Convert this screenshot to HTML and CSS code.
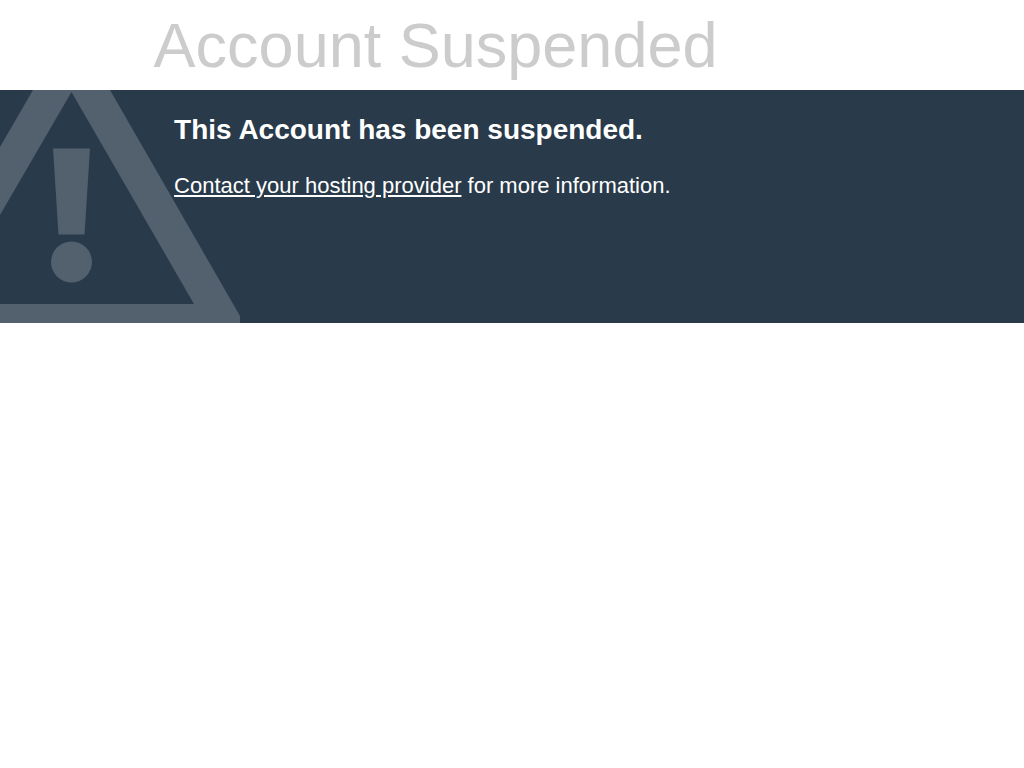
FILE: index.html
```html
<!DOCTYPE html>
<html lang="en">
<head>
    <meta charset="UTF-8">
    <meta name="viewport" content="width=device-width, initial-scale=1.0">
    <title>Account Suspended</title>
    <link rel="stylesheet" href="styles.css">
</head>
<body>
    <header class="page-header">
        <h1 class="page-title">Account Suspended</h1>
    </header>
    <main class="status">
        <!-- Warning sign, cropped by the edges of the band -->
        <svg class="status-icon" viewBox="0 0 240 233" width="240" height="233" aria-hidden="true">
            <path fill-rule="evenodd" d="M0 57 L33 0 H110 L240 226 V233 H0 V214 H194 L71.500 2 L0 125 Z"/>
            <path d="M53 58.500 H90 L84.500 144.500 H58.500 Z"/>
            <circle cx="71.500" cy="172" r="20.500"/>
        </svg>
        <div class="status-text">
            <h2 class="status-title">This Account has been suspended.</h2>
            <p class="status-info"><a href="#">Contact your hosting provider</a> for more information.</p>
        </div>
    </main>
</body>
</html>
```
FILE: styles.css
```css
body {
    margin: 0;
    font-family: "Liberation Sans", Arial, sans-serif;
    font-size: 22px;
    background: #ffffff;
}
.page-header {
    padding: 9px 15%;
}
.page-title {
    margin: 0;
    color: #cccccc;
    font-size: 63px;
    font-weight: normal;
    line-height: 72px;
}
.status {
    position: relative;
    box-sizing: border-box;
    min-height: 233px;
    padding: 24px 17%;
    background: #293a4a;
    color: #ffffff;
}
/* Sits behind the text */
.status-icon {
    position: absolute;
    top: 0;
    left: 0;
    fill: #53606e;
}
.status-text {
    position: relative;
}
.status-title {
    margin: 0 0 28px;
    font-size: 28px;
    line-height: 32px;
}
.status-info {
    margin: 0;
    line-height: 24px;
}
.status-info a {
    color: #ffffff;
}
```
